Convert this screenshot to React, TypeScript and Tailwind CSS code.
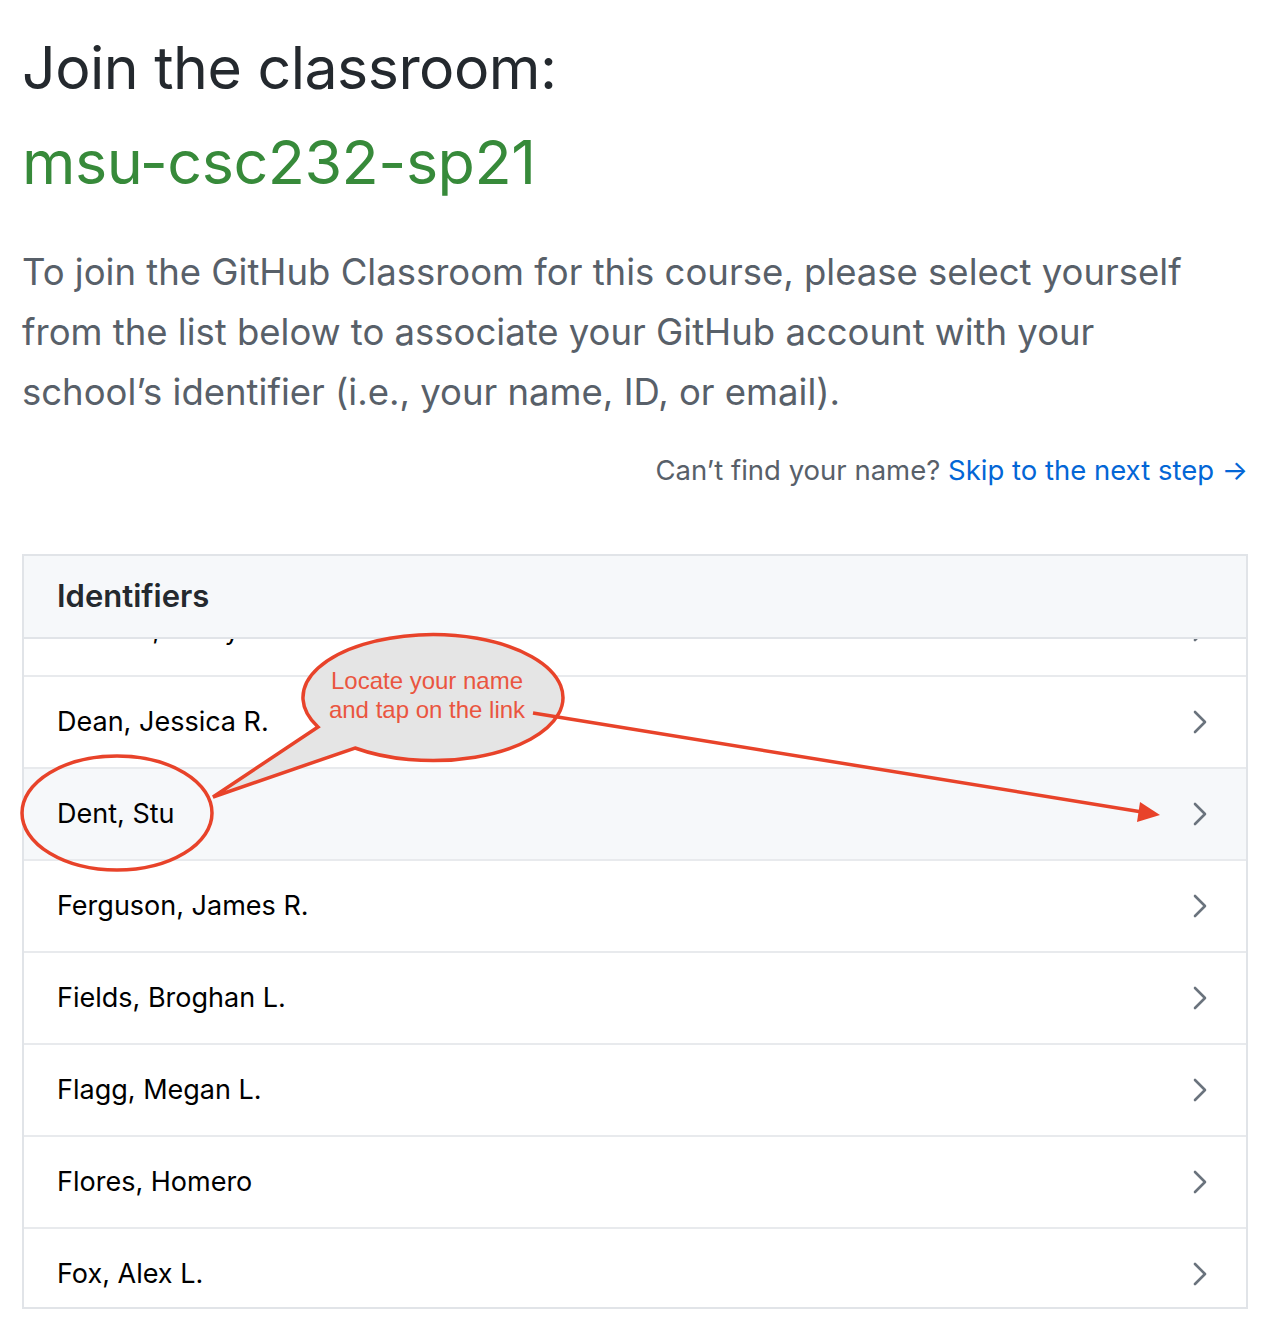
import React from "react";

const names = [
  "Cornett, Haley B.",
  "Dean, Jessica R.",
  "Dent, Stu",
  "Ferguson, James R.",
  "Fields, Broghan L.",
  "Flagg, Megan L.",
  "Flores, Homero",
  "Fox, Alex L.",
];

function Chevron() {
  return (
    <svg width="16" height="26" viewBox="0 0 16 26" fill="none" className="shrink-0">
      <path d="M3 3l10 10-10 10" stroke="#6a737d" strokeWidth="2.6" strokeLinecap="round" strokeLinejoin="round" />
    </svg>
  );
}

function Annotation() {
  return (
    <svg className="pointer-events-none absolute left-0 top-0" width="1270" height="1328" viewBox="0 0 1270 1328">
      <ellipse cx="117" cy="813" rx="95" ry="57" fill="none" stroke="#e8432a" strokeWidth="3.5" />
      <path
        d="M318 727 L213 797 L355 748 A130 63 0 1 0 318 727 Z"
        fill="#e5e5e5"
        stroke="#e8432a"
        strokeWidth="3.5"
        strokeLinejoin="miter"
      />
      <text x="427" y="689" textAnchor="middle" fill="#ea5540" fontSize="24" fontFamily="'Liberation Sans', Arial, sans-serif">
        Locate your name
      </text>
      <text x="427" y="718" textAnchor="middle" fill="#ea5540" fontSize="24" fontFamily="'Liberation Sans', Arial, sans-serif">
        and tap on the link
      </text>
      <line x1="533" y1="713" x2="1142" y2="812" stroke="#e8432a" strokeWidth="3.5" />
      <path d="M1160 815 L1140 802 L1137 822 Z" fill="#e8432a" />
    </svg>
  );
}

export default function App() {
  return (
    <div className="relative h-[1328px] w-[1270px] bg-white font-['Inter',sans-serif]">
      <div className="px-[22px] pt-[28px]">
        <h1 className="text-[59px] leading-[80px] tracking-[-0.5px] text-[#24292e]">Join the classroom:</h1>
        <h2 className="mt-[14px] text-[61px] leading-[80px] tracking-[-0.5px] text-[#378a3a]">msu-csc232-sp21</h2>
        <p className="mt-[40px] pr-[40px] text-[36.5px] leading-[60px] text-[#586069]">
          To join the GitHub Classroom for this course, please select yourself from the list below to associate your
          GitHub account with your school’s identifier (i.e., your name, ID, or email).
        </p>
        <div className="mt-[30px] flex justify-end text-[27.5px] leading-[36px] text-[#586069]">
          <span>
            Can’t find your name? <a className="text-[#0366d6]">Skip to the next step →</a>
          </span>
        </div>

        <div className="mt-[66px] border-2 border-[#e1e4e8]">
          <div className="flex h-[83px] items-center border-b-2 border-[#e1e4e8] bg-[#f6f8fa] px-[33px]">
            <span className="text-[31px] font-semibold text-[#24292e]">Identifiers</span>
          </div>
          <div className="h-[668px] overflow-hidden">
            <ul className="-mt-[54px]">
              {names.map((n) => (
                <li
                  key={n}
                  className={`flex h-[92px] items-center justify-between border-b-2 border-[#e8eaed] pl-[33px] pr-[38px] text-[27px] text-black ${
                    n === "Dent, Stu" ? "bg-[#f6f8fa]" : "bg-white"
                  }`}
                >
                  <span>{n}</span>
                  <Chevron />
                </li>
              ))}
            </ul>
          </div>
        </div>
      </div>
      <Annotation />
    </div>
  );
}
